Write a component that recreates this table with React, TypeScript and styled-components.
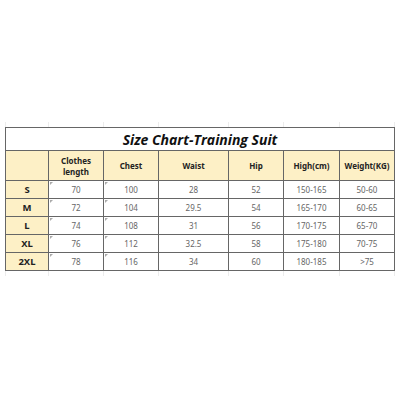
import React from 'react';
import styled, { createGlobalStyle } from 'styled-components';

const GlobalStyle = createGlobalStyle`
  html, body {
    margin: 0;
    padding: 0;
    background: #ffffff;
  }
  body {
    font-family: 'Noto Sans', 'Open Sans', sans-serif;
  }
`;

const columns = '43px 55px 55px 70px 55px 56px 55px';

interface CellProps {
  $mark?: boolean;
}

const Page = styled.div`
  width: 400px;
  height: 400px;
  padding: 122px 0 0 5px;
  box-sizing: border-box;
`;

const Stubs = styled.div`
  display: grid;
  grid-template-columns: ${columns};
  height: 5px;
  border-left: 1px solid #ececec;
`;

const Stub = styled.div`
  border-right: 1px solid #ececec;
`;

const Sheet = styled.div`
  display: grid;
  grid-template-columns: ${columns};
  border-top: 1px solid #666;
  border-left: 1px solid #666;
  width: max-content;
`;

const Title = styled.div`
  grid-column: 1 / -1;
  height: 22px;
  display: flex;
  align-items: center;
  justify-content: center;
  border-right: 1px solid #666;
  border-bottom: 1px solid #666;
  font-family: 'Open Sans', 'Noto Sans', sans-serif;
  font-style: italic;
  font-weight: 700;
  font-size: 14px;
  color: #111;
`;

const Head = styled.div`
  height: 29px;
  display: flex;
  align-items: center;
  justify-content: center;
  text-align: center;
  background: #fdf0c6;
  border-right: 1px solid #666;
  border-bottom: 1px solid #666;
  font-size: 8px;
  font-weight: 700;
  line-height: 11px;
  color: #222;
`;

const SizeCell = styled.div`
  height: 17px;
  display: flex;
  align-items: center;
  justify-content: center;
  background: #fdf0c6;
  border-right: 1px solid #666;
  border-bottom: 1px solid #666;
  font-size: 9.5px;
  font-weight: 700;
  color: #222;
`;

const Cell = styled.div<CellProps>`
  position: relative;
  height: 17px;
  display: flex;
  align-items: center;
  justify-content: center;
  background: #fff;
  border-right: 1px solid #666;
  border-bottom: 1px solid #666;
  font-size: 8px;
  color: #666;

  &::before {
    content: '';
    display: ${({ $mark }) => ($mark ? 'block' : 'none')};
    position: absolute;
    left: 1px;
    top: 1px;
    border-top: 3px solid #aaa;
    border-right: 3px solid transparent;
  }
`;

const headers = ['', 'Clothes\nlength', 'Chest', 'Waist', 'Hip', 'High(cm)', 'Weight(KG)'];

const rows = [
  ['S', '70', '100', '28', '52', '150-165', '50-60'],
  ['M', '72', '104', '29.5', '54', '165-170', '60-65'],
  ['L', '74', '108', '31', '56', '170-175', '65-70'],
  ['XL', '76', '112', '32.5', '58', '175-180', '70-75'],
  ['2XL', '78', '116', '34', '60', '180-185', '>75'],
];

export default function App() {
  return (
    <Page>
      <GlobalStyle />
      <Stubs>
        {headers.map((_, i) => (
          <Stub key={i} />
        ))}
      </Stubs>
      <Sheet>
        <Title>Size Chart-Training Suit</Title>
        {headers.map((h, i) => (
          <Head key={i}>
            {h.split('\n').map((line, j) => (
              <React.Fragment key={j}>
                {j > 0 && <br />}
                {line}
              </React.Fragment>
            ))}
          </Head>
        ))}
        {rows.map((row) =>
          row.map((value, i) =>
            i === 0 ? (
              <SizeCell key={`${row[0]}-${i}`}>{value}</SizeCell>
            ) : (
              <Cell key={`${row[0]}-${i}`} $mark={i === 1 || i === 2}>
                {value}
              </Cell>
            )
          )
        )}
      </Sheet>
      <Stubs>
        {headers.map((_, i) => (
          <Stub key={i} />
        ))}
      </Stubs>
    </Page>
  );
}
